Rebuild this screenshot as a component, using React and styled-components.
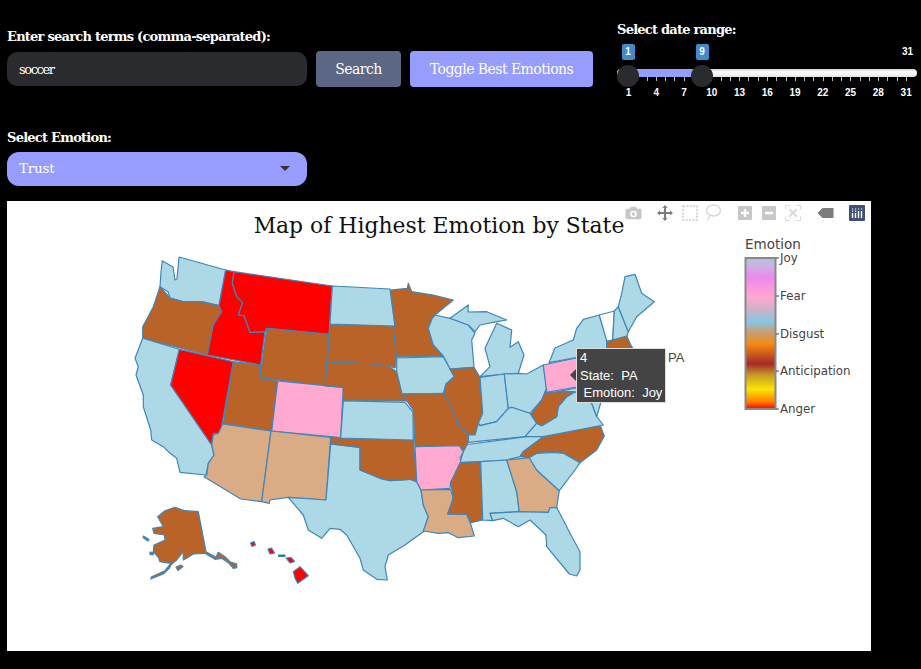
import React from "react";
import styled, { createGlobalStyle } from "styled-components";

const BLUE = "#add8e6";
const BROWN = "#ba6329";
const TAN = "#d9ac85";
const PINK = "#ffa8d0";
const RED = "#ff0000";
const EMPTY = "#ffffff";

const GlobalStyle = createGlobalStyle`
	html, body {
		margin: 0;
		background: #000;
		font-family: "DejaVu Serif", "Liberation Serif", serif;
	}
`;

const Page = styled.div`
	width: 921px;
	height: 669px;
	overflow: hidden;
	padding-left: 7px;
	box-sizing: border-box;
	background: #000;
`;

const Controls = styled.div`
	display: flex;
	align-items: flex-start;
	height: 201px;
`;

const LeftColumn = styled.div`
	width: 586px;
	padding-top: 29px;
`;

const Field = styled.div`
	margin-bottom: 43px;
`;

const Label = styled.div`
	color: #fff;
	font-size: 13px;
	font-weight: 700;
	letter-spacing: -0.76px;
	line-height: 15px;
	margin-bottom: 7px;
`;

const SearchRow = styled.div`
	display: flex;
	align-items: center;
	gap: 9px;
`;

const SearchInput = styled.div`
	width: 288px;
	height: 34px;
	padding-left: 12px;
	border-radius: 10px;
	background: #2a2b2e;
	color: #fff;
	font-size: 13px;
	letter-spacing: -1.4px;
	line-height: 35px;
`;

const Button = styled.button`
	height: 36px;
	width: ${(p) => p.$width}px;
	border: 0;
	border-radius: 4px;
	background: ${(p) => p.$bg};
	color: #fff;
	font-family: inherit;
	font-size: 14px;
	letter-spacing: -0.55px;
	padding: 0;
`;

const Select = styled.div`
	width: 288px;
	height: 32px;
	padding: 0 0 2px 12px;
	display: flex;
	align-items: center;
	justify-content: space-between;
	border-radius: 12px;
	background: #969dff;
	color: #fff;
	font-size: 13.5px;
	letter-spacing: -0.2px;
`;

const Caret = styled.span`
	width: 0;
	height: 0;
	margin-right: 17px;
	border-left: 5.5px solid transparent;
	border-right: 5.5px solid transparent;
	border-top: 5.5px solid #333;
`;

const SliderBlock = styled.div`
	width: 300px;
	margin-left: 24px;
	padding-top: 22px;

	${Label} {
		margin-bottom: 0;
	}
`;

const SliderBody = styled.div`
	position: relative;
	height: 66px;
	padding-top: 32px;
	box-sizing: border-box;
`;

const Rail = styled.div`
	position: relative;
	height: 8px;
	border-radius: 4px;
	background: linear-gradient(#cfcfcf, #fff 35%, #e4e4e4);
`;

const RangeFill = styled.div`
	position: absolute;
	left: 11px;
	width: 74px;
	top: 0;
	bottom: 0;
	background: #969dff;
`;

const Handle = styled.div`
	position: absolute;
	top: -4px;
	left: ${(p) => p.$at - 11}px;
	width: 22px;
	height: 22px;
	border-radius: 50%;
	background: #2a2b2e;
`;

const Pin = styled.div`
	position: absolute;
	top: -25px;
	left: ${(p) => p.$at - 6.5}px;
	width: 13px;
	height: 16px;
	border-radius: 2px;
	background: #428bca;
	color: #fff;
	font: 700 10px/16px "Liberation Sans", sans-serif;
	text-align: center;
`;

const MaxLabel = styled.div`
	position: absolute;
	top: 9px;
	right: 4px;
	color: #fff;
	font: 700 10px/12px "Liberation Sans", sans-serif;
`;

const Ticks = styled.div`
	display: flex;
	justify-content: space-between;
	width: 279px;
	margin-left: 11px;
`;

const Tick = styled.i`
	width: 1px;
	height: 4px;
	background: #bbb;
`;

const TickLabels = styled.div`
	display: grid;
	grid-template-columns: repeat(11, 27.78px);
	margin: 6px 0 0 -2.4px;
	color: #fff;
	font: 700 10px/12px "Liberation Sans", sans-serif;
	text-align: center;
`;

const Chart = styled.div`
	position: relative;
	width: 864px;
	height: 450px;
	background: #fff;
`;

const MapSvg = styled.svg`
	display: block;
`;

const Title = styled.text`
	font-family: "DejaVu Serif", serif;
	font-size: 21.9px;
	fill: #111;
	text-anchor: middle;
`;

const BarTitle = styled.text`
	font-family: "DejaVu Sans", sans-serif;
	font-size: 13.5px;
	fill: #444;
`;

const BarTick = styled.text`
	font-family: "DejaVu Sans", sans-serif;
	font-size: 11.8px;
	fill: #444;
`;

const ModeBar = styled.div`
	position: absolute;
	top: 3px;
	right: 6px;
	display: flex;
	align-items: center;
`;

const ModeIcon = styled.svg`
	display: block;
	margin-left: ${(p) => p.$gap}px;
	color: ${(p) => p.$color || "#c7c7c7"};
`;

const Tooltip = styled.div`
	position: absolute;
	left: 569px;
	top: 147px;
	width: 85px;
	height: 53px;
	padding-left: 3px;
	background: #444;
	border: 1px solid #ddd;
	color: #fff;
	font: 13px/17.5px "Liberation Sans", sans-serif;
	white-space: pre;

	&::before {
		content: "";
		position: absolute;
		left: -7px;
		top: 20px;
		border-top: 6px solid transparent;
		border-bottom: 6px solid transparent;
		border-right: 6px solid #444;
	}
`;

const HoverName = styled.span`
	position: absolute;
	left: 661px;
	top: 148px;
	color: #444;
	font: 13px/17px "Liberation Sans", sans-serif;
`;

const STATES = [
	[BLUE, "162.3,260.7 173,267 175,280 177,279 179,257 225.7,270 219,305.7 201.7,301.7 183,301.7 170,298 168,291.7 160,286.7 161,272"],
	[BROWN, "160,286.7 170,298 183,301.7 201.7,301.7 219,305.7 221.7,311.7 213.3,325 207.3,355 142.7,338.3 142.7,326.7 153.3,306.7"],
	[BLUE, "142.7,338.3 179.3,349.3 170.7,385 211.7,445 214,455 208.3,463.3 206,475 180,472.3 176.7,458.3 168.3,451.7 163.3,446.7 151.7,440 150.7,430 143.3,406.7 143.3,395 136,375 138.3,366.7 135,358.3"],
	[RED, "179.3,349.3 233.3,361.7 220.7,431.7 218.3,433.3 213.3,433.3 211.7,445 170.7,385"],
	[RED, "225.7,270 234,271.7 232.3,283.3 236.7,296.7 242.7,302.7 238.3,315 244,315.7 250,332.3 265,331.7 260.7,365 207.3,355 213.3,325 221.7,311.7 219,305.7"],
	[RED, "234,271.7 332.3,286 329,334.3 266.7,328.3 265,331.7 250,332.3 244,315.7 238.3,315 242.7,302.7 236.7,296.7 232.3,283.3"],
	[BROWN, "266.7,328.3 329,334.3 325,386 260,377.7"],
	[BROWN, "233.3,361.7 260.7,365 260,377.7 277.7,381 271.7,431 223.3,423.3"],
	[PINK, "277.7,381 343.3,387.3 340.7,437.7 271.7,431"],
	[TAN, "222.7,424 271,431 261.7,501.7 240.7,499 204,476.7 206.7,475 208.3,463.3 214,455 211.7,445 213.3,435 218.3,433.3"],
	[TAN, "271,431 330.7,437.3 326,500 288.3,497.3 270,500 269.3,503.3 261.7,501.7"],
	[BLUE, "330.7,444 360,447.3 360,470 380,478.3 390,480.7 410,479.3 416.7,481.7 421,490 423.3,505 428.3,516.7 423.3,531.7 405,545 388.3,555 385,566.7 387.3,580 376.7,579.3 363.3,570 360,558.3 346.7,535 340,529.3 330,528.3 321.7,538.3 308.3,530 303.3,515 288.3,497.3 326,500"],
	[BROWN, "330.7,437.3 413.3,440 416.7,481.7 410,479.3 390,480.7 380,478.3 360,470 360,447.3 330.7,444"],
	[BLUE, "343.3,400.7 405,402.3 413,412 413.3,440 340.7,438"],
	[BROWN, "327.3,361.7 376.7,364 388.3,366 396.7,371.7 401.7,390 406.7,401 343.3,400.7 343.3,387.3 325,386"],
	[BROWN, "330,324 395,326 393.3,330 396.7,357 395,368 388.3,366 376.7,364 327.3,361.7"],
	[BLUE, "332.3,286 390,289 395,326 330,324"],
	[BROWN, "390.5,290 407.3,288.3 408.3,283.3 411.7,291.7 433.3,295 453.3,300 435,315 432.3,318.3 428.3,328.3 433.3,345 443.3,356 396.7,357 393.3,330 395,326"],
	[BLUE, "432.3,318.3 435,315 450,318.3 468.3,325 475,333.3 471.7,340 474,367.3 450,369 443.3,356 433.3,345 428.3,328.3"],
	[BLUE, "450,318.3 468.3,305 468,312 486.7,311.7 506.7,320 496.7,321.7 480,325 475,331.7 468.3,325"],
	[BLUE, "496.7,323.3 511.7,330 510,347.3 518.3,341.7 524,355 518.3,373.3 505,374 480,376.7 490,366.7 485,348.3"],
	[BLUE, "396.7,358 443.3,356.7 450,369 454.3,376.7 446,384 443.3,393.3 402,394 396.7,371.7"],
	[BROWN, "450,369 474,367.3 480,377.3 482.7,413.3 475,435 468.3,435 456.7,423.3 455,413.3 443.3,396.7 446,384 454.3,376.7"],
	[BLUE, "480,377.3 504.3,374 508.3,408.3 496.7,421.7 480,425.7 478.3,423.3 482.7,413.3"],
	[BLUE, "504.3,374 518.3,373.3 526.7,374 543.3,365 546.7,388.3 541.7,400 530,413.3 525,411.7 511.7,407.3 508.3,408.3"],
	[BLUE, "508.3,408.3 511.7,407.3 525,411.7 530,413.3 536.7,423.3 525,436.7 468.3,442.3 468.3,435 475,435 478.3,423.3 480,425.7 496.7,421.7"],
	[BLUE, "463,445 533.3,435.7 543.3,436.7 523.3,451.7 520,456.7 506.7,460 481.7,461.7 460,462.7 463.3,451.7"],
	[BROWN, "520,456.7 523.3,451.7 543.3,436.7 600,425 604.3,436 596.7,450 580,462.7 563.3,453.3 553.3,452.3 536.7,453.3 529.3,457.7"],
	[BLUE, "525,436.7 536.7,423.3 541.7,425.7 556.7,416.7 558.3,406.7 566.7,396.7 575,391.7 591.7,403.3 596.7,416.7 603.3,425 543.3,436.7"],
	[BROWN, "531,414 541.7,400 546.7,388.3 548.3,392.7 558,391.7 575,391.7 566.7,396.7 558.3,406.7 556.7,416.7 541.7,425.7 536.7,423.3"],
	[BLUE, "558,391.7 590,385 601,402 596.7,416.7 591.7,403.3 575,391.7"],
	[PINK, "543.3,365 590,355 597,375 588,385 546.7,392.3"],
	[BLUE, "549,362.7 555,348 573.3,340 576.7,328.3 583.3,319.3 599.3,315 606.7,338.3 606.7,346.7 612,352 590,355"],
	[EMPTY, "599.3,315 614.3,311 612.7,340 606.7,341"],
	[BLUE, "614.3,311 618.3,306.7 628.3,331.7 626.7,337 612.7,340"],
	[BLUE, "618.3,306.7 621.7,293.3 625,276.7 635,274.3 641.7,293.3 654.3,301.7 636.7,316.7 628.3,331.7"],
	[BROWN, "606.7,341.7 626.7,336 631.7,346.7 634,350 606.7,352"],
	[BROWN, "401.7,394 443.3,393.3 455,413.3 456.7,423.3 468.3,435 468.3,442.3 463.3,451.7 459.3,445.7 415,446.7 413.3,410"],
	[PINK, "415,446.7 459.3,445.7 463.3,451.7 460,458 461,463 456.7,470 453,478 450.7,482 450,488.3 421,490 416.7,481.7"],
	[TAN, "421,490 450.7,489.3 453.3,498.3 447.7,514 466.7,514.3 471,525 474.3,536 458.3,537.7 448.3,532.7 438.3,533.3 423.3,531 428.3,516.7 423.3,505"],
	[BROWN, "460,462.7 480.7,461.7 482.7,520 471,522.7 466.7,514.3 447.7,514 453.3,498.3 450.7,482 453,478 456.7,470"],
	[BLUE, "480.7,461.7 506.7,460 516.7,491.7 519.3,511.7 490,513.3 492.7,520.7 482.7,520"],
	[TAN, "506.7,460 529.3,457.7 536.7,470 559.3,490.7 556.7,507.3 550,507.7 548.3,512.3 519.3,512.3 516.7,491.7"],
	[BLUE, "529.3,457.7 536.7,453.3 553.3,452.3 563.3,453.3 580,462.7 575,470 559.3,490.7 536.7,470"],
	[BLUE, "490,513.3 519.3,511.7 548.3,512.3 550,507.7 556.7,507.3 570,533.3 580,551.7 580,570 576.7,576 569.3,574 546.7,546.7 546,535 530,520 518.3,526.7 503.3,518.3 492.7,520.7"],
	[BROWN, "198.3,511.7 206,551.7 216,557.3 218.3,552.3 225,556.7 230,561.7 236.7,564 236.7,567.7 233.3,568.3 228.3,562.7 221.7,558.3 215,559.3 205,553.3 193.3,554 188.3,557.3 183.3,560 183.3,551.7 176.7,560 171.7,564 169.3,568.3 163.3,574 150.7,579 151.7,576.7 165,570.7 170.7,563.3 160,561.7 158.3,557.3 153.3,551.7 154,545 165,540 164.3,535 154,533.3 152.7,528.3 163.3,526.7 157.7,516.7 165,510.7 175,507.3 185,510.7"],
	[BROWN, "143.5,536 149,539.5 148,541 143,537.5"],
	[BROWN, "150,552 153.5,552.5 153,555 150,554.5"],
	[BROWN, "176,567 181,565 183,566.5 178,570.5"],
	[RED, "250.5,543 254,541.5 255.5,545 252,546.5"],
	[RED, "268,549 271.5,548 274.5,553 270,554"],
	[RED, "278.5,555 285,555 285,556.5 278.5,556.5"],
	[RED, "286,558 291,557.5 294.5,561.5 290,563"],
	[RED, "293.3,571.7 300,566.7 308.3,575.7 297.7,583.3 295,578"],
];

const COLORBAR_STOPS = [
	[0, "#b4c0e0"],
	[0.05, "#c9b3e0"],
	[0.13, "#ee88ee"],
	[0.26, "#ffa8d0"],
	[0.35, "#c8b4c8"],
	[0.42, "#87c6e8"],
	[0.49, "#c69e78"],
	[0.57, "#f58a10"],
	[0.7, "#a52a2a"],
	[0.78, "#c8a020"],
	[0.87, "#fbe405"],
	[0.95, "#ff8000"],
	[1, "#ff0000"],
];

const COLORBAR_TICKS = [
	["Joy", 258],
	["Fear", 296],
	["Disgust", 334],
	["Anticipation", 371],
	["Anger", 409],
];

const DATE_LABELS = [1, 4, 7, 10, 13, 16, 19, 22, 25, 28, 31];
const DAY_WIDTH = 9.26;
const dayOffset = (day) => 11 + (day - 1) * DAY_WIDTH;

const Camera = () => (
	<ModeIcon $gap={0} width="17" height="14" viewBox="0 0 18 14">
		<path
			fill="currentColor"
			fillRule="evenodd"
			d="M2 2.5h3l1.5-2h5L13 2.5h3a1.5 1.5 0 0 1 1.5 1.5v8a1.5 1.5 0 0 1-1.5 1.5H2A1.5 1.5 0 0 1 .5 12V4A1.5 1.5 0 0 1 2 2.5zM9 4.5a3.5 3.5 0 1 0 0 7 3.500 3.500 0 0 0 0-7zm0 1.6a1.9 1.9 0 1 1 0 3.8 1.9 1.9 0 0 1 0-3.800z"
		/>
	</ModeIcon>
);

const Pan = () => (
	<ModeIcon $gap={15} $color="#7c7c7c" width="16" height="16" viewBox="0 0 16 16">
		<path fill="currentColor" d="M8 0l2.6 3H9v4h4V5.4L16 8l-3 2.6V9H9v4h1.6L8 16l-2.6-3H7V9H3v1.6L0 8l3-2.6V7h4V3H5.4z" />
	</ModeIcon>
);

const BoxSelect = () => (
	<ModeIcon $gap={9} $color="#d8d8d8" width="16" height="16" viewBox="0 0 16 16">
		<rect x="1" y="1" width="14" height="14" fill="none" stroke="currentColor" strokeWidth="2" strokeDasharray="2 1.4" />
	</ModeIcon>
);

const Lasso = () => (
	<ModeIcon $gap={7} $color="#d8d8d8" width="16" height="17" viewBox="0 0 16 17">
		<ellipse cx="8.5" cy="6.5" rx="7" ry="5.5" fill="none" stroke="currentColor" strokeWidth="1.4" />
		<path d="M5 11c-1 1.500-1 3-2.500 5" fill="none" stroke="currentColor" strokeWidth="1.4" />
	</ModeIcon>
);

const PlusBox = () => (
	<ModeIcon $gap={17} width="14" height="14" viewBox="0 0 14 14">
		<path fill="currentColor" fillRule="evenodd" d="M1 0h12a1 1 0 0 1 1 1v12a1 1 0 0 1-1 1H1a1 1 0 0 1-1-1V1a1 1 0 0 1 1-1zm4.800 3v2.800H3v2.400h2.800V11h2.400V8.200H11V5.800H8.200V3z" />
	</ModeIcon>
);

const MinusBox = () => (
	<ModeIcon $gap={10} width="14" height="14" viewBox="0 0 14 14">
		<path fill="currentColor" fillRule="evenodd" d="M1 0h12a1 1 0 0 1 1 1v12a1 1 0 0 1-1 1H1a1 1 0 0 1-1-1V1a1 1 0 0 1 1-1zM3 5.800v2.400h8V5.800z" />
	</ModeIcon>
);

const Autoscale = () => (
	<ModeIcon $gap={9} $color="#d8d8d8" width="16" height="16" viewBox="0 0 17 17">
		<path fill="none" stroke="currentColor" d="M.5 5V.5H5M12 .5h4.500V5M16.500 12v4.500H12M5 16.500H.5V12" />
		<path fill="none" stroke="currentColor" strokeWidth="2" d="M4.500 4.500l8 8M12.500 4.500l-8 8" />
	</ModeIcon>
);

const HoverTag = () => (
	<ModeIcon $gap={16} $color="#7c7c7c" width="17" height="10" viewBox="0 0 16 10">
		<path fill="currentColor" d="M0 5l5-5h11v10H5z" />
	</ModeIcon>
);

const PlotlyLogo = () => (
	<ModeIcon $gap={15} width="16" height="16" viewBox="0 0 16 16">
		<rect width="16" height="16" rx="1" fill="#3f4f75" />
		<path stroke="#fff" strokeWidth="1.400" d="M3.500 8v5M6.500 8v5M9.500 6v7M12.500 6v7" />
		<path stroke="#fff" strokeWidth="1.200" strokeDasharray="1.200 1.800" d="M3 4h11M3 6.200h5" />
	</ModeIcon>
);

const App = () => (
	<Page>
		<GlobalStyle />
		<Controls>
			<LeftColumn>
				<Field>
					<Label>Enter search terms (comma-separated):</Label>
					<SearchRow>
						<SearchInput>soccer</SearchInput>
						<Button $bg="#5c6784" $width={85}>
							Search
						</Button>
						<Button $bg="#969dff" $width={183}>
							Toggle Best Emotions
						</Button>
					</SearchRow>
				</Field>
				<Field>
					<Label>Select Emotion:</Label>
					<Select>
						Trust
						<Caret />
					</Select>
				</Field>
			</LeftColumn>
			<SliderBlock>
				<Label>Select date range:</Label>
				<SliderBody>
					<MaxLabel>31</MaxLabel>
					<Rail>
						<RangeFill />
						<Handle $at={dayOffset(1)} />
						<Handle $at={dayOffset(9)} />
						<Pin $at={dayOffset(1)}>1</Pin>
						<Pin $at={dayOffset(9)}>9</Pin>
					</Rail>
					<Ticks>
						{Array.from({ length: 31 }, (_, i) => (
							<Tick key={i} />
						))}
					</Ticks>
					<TickLabels>
						{DATE_LABELS.map((day) => (
							<span key={day}>{day}</span>
						))}
					</TickLabels>
				</SliderBody>
			</SliderBlock>
		</Controls>
		<Chart>
			<MapSvg width="864" height="450" viewBox="7 201 864 450">
				<defs>
					<linearGradient id="emotion-scale" x1="0" y1="0" x2="0" y2="1">
						{COLORBAR_STOPS.map(([offset, color]) => (
							<stop key={offset} offset={offset} stopColor={color} />
						))}
					</linearGradient>
				</defs>
				<Title x="439" y="233">
					Map of Highest Emotion by State
				</Title>
				{STATES.map(([fill, points], i) => (
					<polygon key={i} points={points} fill={fill} stroke="#3f86b8" strokeWidth="1.2" strokeLinejoin="round" />
				))}
				<BarTitle x="745" y="249">
					Emotion
				</BarTitle>
				<rect x="745.500" y="258" width="30" height="151" fill="url(#emotion-scale)" stroke="#888" strokeWidth="2" />
				{COLORBAR_TICKS.map(([label, y]) => (
					<g key={label}>
						<line x1="776" x2="779" y1={y} y2={y} stroke="#444" />
						<BarTick x="780" y={y + 4}>
							{label}
						</BarTick>
					</g>
				))}
			</MapSvg>
			<ModeBar>
				<Camera />
				<Pan />
				<BoxSelect />
				<Lasso />
				<PlusBox />
				<MinusBox />
				<Autoscale />
				<HoverTag />
				<PlotlyLogo />
			</ModeBar>
			<Tooltip>{"4\nState:  PA\n Emotion:  Joy"}</Tooltip>
			<HoverName>PA</HoverName>
		</Chart>
	</Page>
);

export default App;
